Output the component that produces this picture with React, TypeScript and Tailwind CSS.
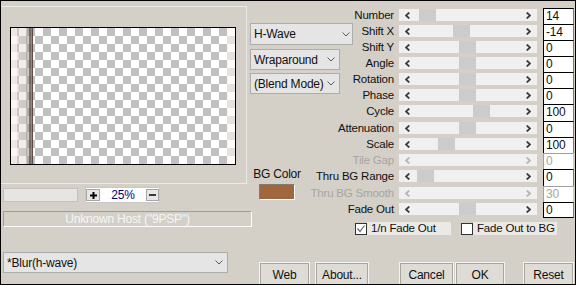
import React from 'react';

type Row = { label: string; value: string; thumb?: number; tall?: boolean; disabled?: boolean };

const rows: Row[] = [
  { label: 'Number', value: '14', thumb: 20 },
  { label: 'Shift X', value: '-14', thumb: 54 },
  { label: 'Shift Y', value: '0', thumb: 60 },
  { label: 'Angle', value: '0', thumb: 60 },
  { label: 'Rotation', value: '0', thumb: 60 },
  { label: 'Phase', value: '0', thumb: 60 },
  { label: 'Cycle', value: '100', thumb: 74, tall: true },
  { label: 'Attenuation', value: '0', thumb: 60 },
  { label: 'Scale', value: '100', thumb: 39 },
  { label: 'Tile Gap', value: '0', disabled: true },
  { label: 'Thru BG Range', value: '0', thumb: 18, tall: true },
  { label: 'Thru BG Smooth', value: '30', disabled: true },
  { label: 'Fade Out', value: '0', thumb: 60 },
];

function Chevron() {
  return (
    <svg width="8" height="5" viewBox="0 0 8 5" className="text-[#5a5a5a]">
      <path d="M0.5 0.5 L4 4 L7.5 0.5" fill="none" stroke="currentColor" strokeWidth="1" />
    </svg>
  );
}

function Arrow({ left, disabled }: { left?: boolean; disabled?: boolean }) {
  return (
    <svg width="5" height="7" viewBox="0 0 5 7" className={disabled ? 'text-[#b4b4b4]' : 'text-[#3a3a3a]'}>
      <path
        d={left ? 'M4.3 0.5 L1 3.5 L4.3 6.5' : 'M0.7 0.5 L4 3.5 L0.7 6.5'}
        fill="none"
        stroke="currentColor"
        strokeWidth="1.7"
      />
    </svg>
  );
}

function Combo({ text, w, h = 'h-[21px]', pr = 'pr-[4px]' }: { text: string; w: string; h?: string; pr?: string }) {
  return (
    <div className={`${w} ${h} ${pr} flex items-center justify-between pl-[3px] bg-[#e5e5e5] border border-[#acacac]`}>
      <span className="whitespace-nowrap text-[12px]">{text}</span>
      <Chevron />
    </div>
  );
}

function SliderRow({ row, last }: { row: Row; last: boolean }) {
  return (
    <div className={`flex ${row.tall ? 'h-[17px]' : 'h-[16px]'}`}>
      <div className="flex w-[46px] justify-end pr-[5px]">
        <span className={`whitespace-nowrap leading-[14px] ${row.disabled ? 'text-[#a7a5a0]' : ''}`}>{row.label}</span>
      </div>
      <div className="relative mt-[1px] flex h-[12px] w-[138px] items-center justify-between bg-[#f0f0f0] px-[6px]">
        {row.thumb !== undefined && (
          <div className="absolute top-0 h-full w-[17px] bg-[#cccccc]" style={{ left: row.thumb }} />
        )}
        <Arrow left disabled={row.disabled} />
        <Arrow disabled={row.disabled} />
      </div>
      <div
        className={`ml-[6px] h-full w-[31px] border-l border-t border-r bg-white pl-[2px] text-[12px] leading-[14px] ${
          last ? 'border-b' : ''
        } ${row.disabled ? 'border-[#a0a0a0] border-r-[#c8c8c8] text-[#a7a5a0]' : 'border-black border-r-[#7a7a7a]'}`}
      >
        {row.value}
      </div>
    </div>
  );
}

function Checkbox({ checked }: { checked?: boolean }) {
  return (
    <div className="flex h-[12px] w-[12px] shrink-0 items-center justify-center border border-[#333333] bg-white">
      {checked && (
        <svg width="10" height="10" viewBox="0 0 10 10">
          <path d="M1.5 4.5 L4 7.5 L8.5 1.5" fill="none" stroke="#6a6a6a" strokeWidth="1.2" />
        </svg>
      )}
    </div>
  );
}

function Button({ text, w, ml }: { text: string; w: string; ml: string }) {
  return (
    <div
      className={`${w} ${ml} flex h-[24px] shrink-0 items-start justify-center border border-[#f4f4f4] bg-[#dfdcd6] pt-[4px] text-[12px] shadow-[inset_1px_1px_0_#a8a6a0,inset_-1px_0_0_#a8a6a0]`}
    >
      {text}
    </div>
  );
}

export default function App() {
  return (
    <div className="flex h-[285px] w-[576px] overflow-hidden border border-black bg-[#d4d0c8] [font-family:'Liberation_Sans',Arial,sans-serif] text-[11.5px] font-normal leading-[16px] tracking-[-0.2px] text-[#111]">
      {/* left: preview */}
      <div className="flex w-[249px] shrink-0 flex-col">
        <div className="mt-[5px] h-[178px] w-[246px] border-b border-r border-t border-[#ecebe7]">
          <div className="relative ml-[9px] mt-[20px] h-[138px] w-[226px] border border-black bg-[conic-gradient(#ffffff_25%,#c0c0c0_0_50%,#ffffff_0_75%,#c0c0c0_0)] bg-[length:16px_16px]">
            <div className="absolute left-0 top-0 h-full w-[6px] bg-[rgba(252,242,238,0.78)]" />
            <div className="absolute left-[6px] top-0 h-full w-[2px] bg-[rgba(210,200,195,0.55)]" />
            <div className="absolute left-[8px] top-0 h-full w-[7px] bg-[rgba(225,215,210,0.45)]" />
            <div className="absolute left-[15px] top-0 h-full w-[3px] bg-[rgba(160,150,144,0.55)]" />
            <div className="absolute left-[18px] top-0 h-full w-[2px] bg-[rgba(95,82,74,0.8)]" />
            <div className="absolute left-[20px] top-0 h-full w-[1px] bg-[#b87d55]" />
            <div className="absolute left-[21px] top-0 h-full w-[1px] bg-[#5e4a3e]" />
            <div className="absolute right-0 top-0 h-full w-[8px] bg-[rgba(255,246,242,0.6)]" />
          </div>
        </div>

        <div className="mt-[3px] flex items-start">
          <div className="ml-[2px] mt-[1px] h-[14px] w-[75px] border border-[#c4c1bb] bg-[#e6e5e3]" />
          <div className="ml-[7px] flex h-[16px] w-[75px] items-center border border-[#c8c8c8] bg-white">
            <div className="flex h-[12px] w-[14px] items-center justify-center border border-[#a6a6a6] bg-[#e6e6e6]">
              <svg width="7" height="7" viewBox="0 0 7 7">
                <path d="M0 3.5 H7 M3.5 0 V7" stroke="#000" strokeWidth="2" />
              </svg>
            </div>
            <div className="flex-1 text-center text-[12px] leading-[14px] text-[#000080]">25%</div>
            <div className="flex h-[12px] w-[13px] items-center justify-center border border-[#a6a6a6] bg-[#e6e6e6]">
              <svg width="7" height="2" viewBox="0 0 7 2">
                <path d="M0 1 H7" stroke="#000" strokeWidth="1.5" />
              </svg>
            </div>
          </div>
        </div>

        <div className="ml-[2px] mt-[8px] h-[16px] w-[249px] shrink-0 border border-[#a09d96] border-b-white border-r-white text-center text-[12px] leading-[14px] text-[#f6f6f6]">
          Unknown Host ("9PSP")
        </div>

        <div className="ml-[2px] mt-[25px]">
          <Combo text="*Blur(h-wave)" w="w-[225px]" pr="pr-[4px]" />
        </div>
      </div>

      {/* right: controls */}
      <div className="flex flex-1 flex-col">
        <div className="flex">
          <div className="flex w-[103px] shrink-0 flex-col pt-[22px]">
            <Combo text="H-Wave" w="w-[103px]" h="h-[22px]" pr="pr-[2px]" />
            <div className="mt-[4px]">
              <Combo text="Wraparound" w="w-[90px]" />
            </div>
            <div className="mt-[3px]">
              <Combo text="(Blend Mode)" w="w-[90px]" />
            </div>
            <div className="mt-[72px] flex w-[54px] flex-col items-center">
              <span className="whitespace-nowrap text-[12px]">BG Color</span>
              <div className="mt-[2px] h-[16px] w-[36px] border border-[#7e7c78] border-b-white border-r-white bg-[#a0673f]" />
            </div>
          </div>

          <div className="flex flex-col pt-[7px]">
            {rows.map((r, i) => (
              <SliderRow key={r.label} row={r} last={i === rows.length - 1} />
            ))}
          </div>
        </div>

        <div className="mt-[4px] flex items-center pl-[105px]">
          <Checkbox checked />
          <div className="h-[13px] w-[84px] whitespace-nowrap bg-[#ebe9e5] pl-[4px] leading-[13px]">1/n Fade Out</div>
          <div className="ml-[10px]">
            <Checkbox />
          </div>
          <div className="h-[13px] w-[84px] whitespace-nowrap bg-[#ebe9e5] pl-[4px] leading-[13px]">Fade Out to BG</div>
        </div>

        <div className="mt-[27px] flex">
          <Button text="Web" w="w-[51px]" ml="ml-[9px]" />
          <Button text="About..." w="w-[54px]" ml="ml-[5px]" />
          <Button text="Cancel" w="w-[55px]" ml="ml-[30px]" />
          <Button text="OK" w="w-[50px]" ml="ml-[1px]" />
          <Button text="Reset" w="w-[51px]" ml="ml-[18px]" />
        </div>
      </div>
    </div>
  );
}
